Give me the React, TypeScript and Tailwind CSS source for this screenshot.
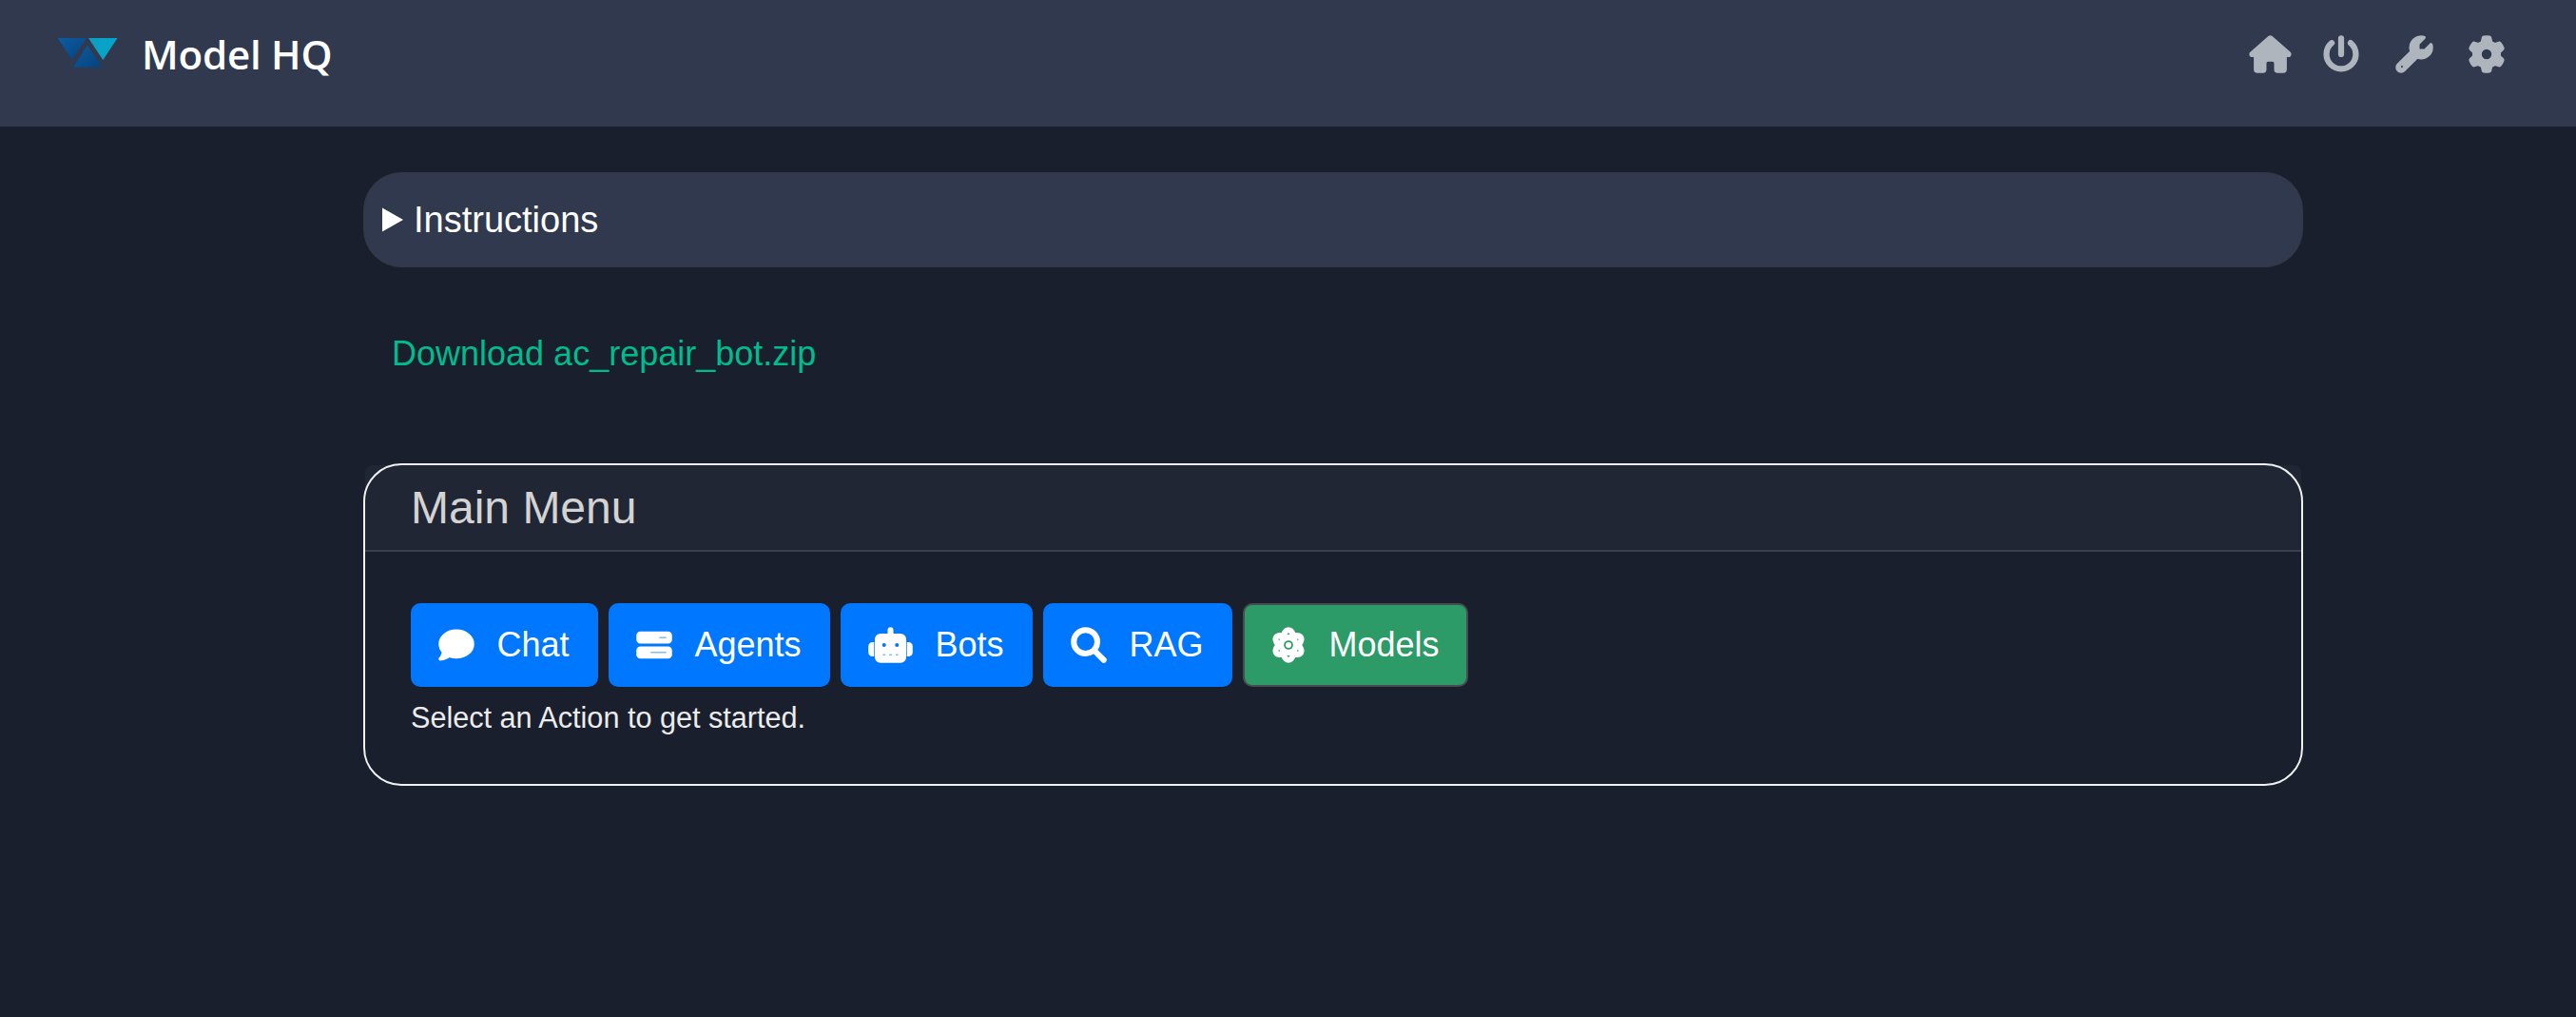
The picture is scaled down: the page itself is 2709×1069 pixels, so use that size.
import type { ReactNode } from "react";
import type { IconType } from "react-icons";
import {
  FaAtom,
  FaBarsProgress,
  FaComment,
  FaGear,
  FaHouse,
  FaMagnifyingGlass,
  FaPowerOff,
  FaRobot,
  FaWrench,
} from "react-icons/fa6";

function Logo() {
  return (
    <svg className="h-[32px] w-[64px]" viewBox="0 0 64 32" aria-hidden="true">
      <defs>
        <linearGradient id="deep" x1="0" y1="0" x2="1" y2="1">
          <stop offset="0" stopColor="#0d5c9e" />
          <stop offset="1" stopColor="#05427f" />
        </linearGradient>
        <linearGradient id="cyan" x1="0" y1="0" x2="1" y2="0">
          <stop offset="0" stopColor="#0f9ec0" />
          <stop offset="1" stopColor="#02a6cc" />
        </linearGradient>
      </defs>
      <path d="M0.5 1H31L15.8 24Z" fill="url(#deep)" />
      <path d="M33 1H63.5L48.3 24Z" fill="url(#cyan)" />
      <path d="M32 8.5L47.3 31.8H17Z" fill="url(#deep)" />
    </svg>
  );
}

type ActionProps = { icon: IconType; label: string; wide?: boolean; green?: boolean };

function Action({ icon: Icon, label, wide, green }: ActionProps) {
  return (
    <button
      className={
        "flex h-[88px] items-center rounded-[10px] border-2 px-[28.4px] text-[36px] leading-none text-white " +
        (green ? "border-[#494b50] bg-[#2d9b68]" : "border-[#0077ff] bg-[#0077ff]")
      }
    >
      <Icon
        className={
          "h-[36px] shrink-0 overflow-visible stroke-[22] " + (wide ? "w-[45px]" : "w-[36px]")
        }
      />
      <span className="ml-[24px]">{label}</span>
    </button>
  );
}

function Header({ children }: { children: ReactNode }) {
  return (
    <header className="flex h-[133px] items-start justify-between bg-[#31394e] pr-[75px] pl-[60px]">
      <div className="flex h-[116px] items-start pt-[39px]">
        <Logo />
        <span className="mt-[-12px] ml-[25px] font-['Open_Sans'] text-[42px] leading-[60px] font-semibold tracking-[-0.2px] text-white">
          Model HQ
        </span>
      </div>
      <nav className="flex items-center pt-[38px] text-[#afb5bd]">{children}</nav>
    </header>
  );
}

export default function App() {
  return (
    <div className="min-h-[1069px] bg-[#1a1f2d] font-['Liberation_Sans',sans-serif]">
      <Header>
        <FaHouse className="h-[38px] w-[43px] overflow-visible stroke-[20]" />
        <FaPowerOff className="ml-[34px] h-[38px] w-[38px] overflow-visible stroke-[20]" />
        <FaWrench className="ml-[39px] h-[38px] w-[38px] overflow-visible stroke-[20]" />
        <FaGear className="ml-[38px] h-[38px] w-[38px] overflow-visible stroke-[20]" />
      </Header>

      <main className="ml-[382px] w-[2040px] pt-[48px]">
        <section className="flex h-[100px] items-center rounded-[40px] border border-[#343940] bg-[#31394e] pl-[19px] text-white">
          <svg className="h-[26px] w-[22px]" viewBox="0 0 22 26" aria-hidden="true">
            <path d="M0 0.5L22 13L0 25.5Z" fill="currentColor" />
          </svg>
          <span className="ml-[11px] text-[38px] leading-[44px]">Instructions</span>
        </section>

        <a className="mt-[70px] ml-[30px] block text-[36px] leading-[42px] text-[#00bc8c]">
          Download ac_repair_bot.zip
        </a>

        <section className="mt-[94px] h-[339px] rounded-[40px] border-2 border-[#f0f1f2]">
          <div className="h-[91px] rounded-t-[8px] border-b-2 border-[#3b3f4c] bg-[#d9d9ff]/[0.04] pl-[48px] text-[48px] leading-[90px] text-[#d3d3d3]">
            Main Menu
          </div>
          <div className="pt-[54px] pl-[48px]">
            <div className="flex gap-[11.2px]">
              <Action icon={FaComment} label="Chat" />
              <Action icon={FaBarsProgress} label="Agents" />
              <Action icon={FaRobot} label="Bots" wide />
              <Action icon={FaMagnifyingGlass} label="RAG" />
              <Action icon={FaAtom} label="Models" green />
            </div>
            <p className="mt-[14px] text-[30.6px] leading-[36px] text-[#ececec]">
              Select an Action to get started.
            </p>
          </div>
        </section>
      </main>
    </div>
  );
}
